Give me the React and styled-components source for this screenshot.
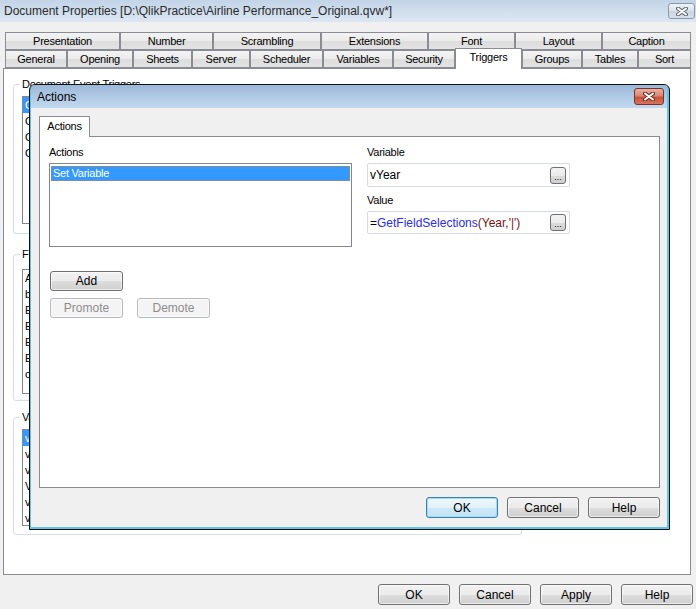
import React from 'react';
import styled, { createGlobalStyle } from 'styled-components';

const GlobalStyle = createGlobalStyle`
  html, body {
    margin: 0;
    padding: 0;
  }
  body {
    width: 696px;
    height: 609px;
    overflow: hidden;
    background: #f0f0f0;
  }
  * {
    box-sizing: border-box;
  }
`;

const Window = styled.div`
  position: relative;
  width: 696px;
  height: 609px;
  display: flex;
  flex-direction: column;
  background: #f0f0f0;
  font-family: 'Liberation Sans', Arial, sans-serif;
  font-size: 11px;
  letter-spacing: -0.25px;
  color: #000;
`;

const TitleBar = styled.div`
  height: ${props => props.$h || 22}px;
  flex: none;
  display: flex;
  align-items: center;
  justify-content: space-between;
  padding: 0 ${props => props.$pr || 1}px 0 ${props => props.$pl || 4}px;
  background: ${props => props.$active
    ? 'linear-gradient(#9cb8d9, #c3d9ef)'
    : 'linear-gradient(#c3d4e7, #dce7f2)'};
`;

const TitleText = styled.span`
  font-size: 12px;
  letter-spacing: 0;
  color: ${props => props.$active ? '#000' : '#2b2b2b'};
`;

const CloseButton = styled.div`
  width: ${props => props.$w}px;
  height: ${props => props.$h}px;
  display: flex;
  align-items: center;
  justify-content: center;
  border-radius: 3px;
  border: 1px solid ${props => props.$red ? '#7e3327' : '#8a98aa'};
  background: ${props => props.$red
    ? 'linear-gradient(#eab0a4 0%, #d98676 45%, #c5553d 55%, #d7735c 100%)'
    : 'linear-gradient(#eef2f6 0%, #dbe2ea 50%, #cbd5e0 51%, #d8e0e9 100%)'};
`;

const Body = styled.div`
  flex: 1;
  display: flex;
  flex-direction: column;
  padding: 10px 0 0 3px;
`;

const TabRow = styled.div`
  display: flex;
  align-items: flex-end;
  height: 18px;
  margin-left: 2px;
`;

const Tab = styled.div`
  position: relative;
  width: ${props => props.$w}px;
  height: ${props => props.$selected ? 21 : 18}px;
  margin-bottom: ${props => props.$selected ? -1 : 0}px;
  z-index: ${props => props.$selected ? 2 : 0};
  display: flex;
  align-items: center;
  justify-content: center;
  padding-bottom: ${props => props.$selected ? 4 : 0}px;
  border: 1px solid #898c95;
  border-bottom: ${props => props.$selected ? 'none' : '1px solid #898c95'};
  background: ${props => props.$selected
    ? '#fff'
    : 'linear-gradient(#f3f3f3 0%, #ebebeb 50%, #dddddd 51%, #e3e3e3 100%)'};
  white-space: nowrap;
`;

const TabPanel = styled.div`
  width: 688px;
  height: 507px;
  border: 1px solid #898c95;
  background: #fff;
  padding: 8px 0 0 9px;
  display: flex;
  flex-direction: column;
`;

const GroupBox = styled.fieldset`
  width: 509px;
  margin: ${props => props.$mt}px 0 0 0;
  padding: ${props => props.$pt}px 8px ${props => props.$pb}px 8px;
  border: 1px solid #d5dfe5;
  border-radius: 3px;
  min-inline-size: 0;
`;

const GroupLegend = styled.legend`
  margin-left: -2px;
  padding: 0 2px;
  line-height: 14px;
  font-size: 11px;
`;

const ListBox = styled.div`
  width: ${props => props.$w}px;
  height: ${props => props.$h}px;
  border: 1px solid #828790;
  background: #fff;
  padding: ${props => props.$pad || '0'};
  overflow: hidden;
`;

const ListItem = styled.div`
  height: ${props => props.$h || 16}px;
  line-height: ${props => props.$h || 16}px;
  padding-left: 2px;
  white-space: nowrap;
  background: ${props => props.$selected ? '#3399ff' : 'transparent'};
  color: ${props => props.$selected ? '#fff' : '#000'};
  outline: ${props => props.$focus ? '1px dotted #c9803a' : 'none'};
  outline-offset: -1px;
`;

const ButtonBar = styled.div`
  display: flex;
  justify-content: flex-end;
  gap: 9px;
  margin-top: ${props => props.$mt}px;
  padding-right: ${props => props.$pr}px;
`;

const Button = styled.div`
  width: ${props => props.$w || 72}px;
  height: ${props => props.$h || 21}px;
  display: flex;
  align-items: center;
  justify-content: center;
  border-radius: 3px;
  border: 1px solid ${props => props.$disabled ? '#b5b9bd' : props.$default ? '#3c7fb1' : '#707070'};
  background: ${props => props.$disabled
    ? '#f4f4f4'
    : props.$default
      ? 'linear-gradient(#eef7fc 0%, #e3f1fa 50%, #cde8f7 51%, #c4e3f5 100%)'
      : 'linear-gradient(#f2f2f2 0%, #ebebeb 50%, #dddddd 51%, #cfcfcf 100%)'};
  box-shadow: ${props => props.$default ? 'inset 0 0 0 1px #9fdcf5' : 'inset 0 0 0 1px rgba(255,255,255,0.6)'};
  color: ${props => props.$disabled ? '#8d8d8d' : '#000'};
  font-size: 12px;
  letter-spacing: 0;
`;

const Dialog = styled.div`
  position: absolute;
  left: 29px;
  top: 84px;
  width: 641px;
  height: 446px;
  z-index: 10;
  display: flex;
  flex-direction: column;
  border: 1px solid #101010;
  border-radius: 6px 6px 0 0;
  background: #5fc4ea;
  padding: 0 2px 2px 1px;
  overflow: hidden;
`;

const DialogBody = styled.div`
  flex: 1;
  background: #f0f0f0;
  padding: 8px 7px 0 8px;
  display: flex;
  flex-direction: column;
`;

const InnerTab = styled.div`
  width: 51px;
  height: 21px;
  margin-bottom: -1px;
  position: relative;
  z-index: 1;
  display: flex;
  align-items: center;
  justify-content: center;
  padding-bottom: 2px;
  border: 1px solid #898c95;
  border-bottom: none;
  background: #fff;
`;

const InnerPanel = styled.div`
  height: 352px;
  border: 1px solid #898c95;
  background: #fff;
  padding: 7px 0 0 9px;
  display: grid;
  grid-template-columns: 303px 203px;
  column-gap: 15px;
  align-items: start;
`;

const Column = styled.div`
  display: flex;
  flex-direction: column;
`;

const Label = styled.div`
  height: 16px;
  line-height: 16px;
  margin-top: ${props => props.$mt || 0}px;
  margin-bottom: 3px;
`;

const ButtonRow = styled.div`
  display: flex;
  gap: 14px;
  margin-top: ${props => props.$mt}px;
  margin-left: 1px;
`;

const TextField = styled.div`
  height: ${props => props.$h}px;
  display: flex;
  align-items: center;
  justify-content: space-between;
  padding: 0 3px 0 2px;
  border: 1px solid #d6dbe1;
  border-radius: 2px;
  background: #fff;
  font-size: 12px;
  letter-spacing: 0;
`;

const BrowseButton = styled.div`
  width: 16px;
  height: 17px;
  display: flex;
  align-items: flex-end;
  justify-content: center;
  padding-bottom: 3px;
  border: 1px solid #707070;
  border-radius: 3px;
  background: linear-gradient(#f2f2f2 0%, #ebebeb 50%, #dddddd 51%, #cfcfcf 100%);
  font-size: 9px;
  line-height: 6px;
  letter-spacing: 0;
`;

const Fn = styled.span`
  color: ${props => props.$c};
`;

const XIcon = ({ w, h, outline }) => (
  <svg width={w} height={h} viewBox={`0 0 ${w} ${h}`}>
    <path d={`M2 1.5 L${w - 2} ${h - 1.5} M${w - 2} 1.5 L2 ${h - 1.5}`} stroke={outline} strokeWidth="4" strokeLinecap="round" />
    <path d={`M2 1.5 L${w - 2} ${h - 1.5} M${w - 2} 1.5 L2 ${h - 1.5}`} stroke="#fff" strokeWidth="2" strokeLinecap="round" />
  </svg>
);

const row1 = [
  ['Presentation', 115], ['Number', 93], ['Scrambling', 108], ['Extensions', 107],
  ['Font', 87], ['Layout', 87], ['Caption', 89],
];

const row2 = [
  ['General', 62], ['Opening', 66], ['Sheets', 59], ['Server', 58], ['Scheduler', 73],
  ['Variables', 70], ['Security', 62], ['Triggers', 67], ['Groups', 60], ['Tables', 56], ['Sort', 53],
];

const groups = [
  {
    title: 'Document Event Triggers', mt: 0, pt: 5, pb: 9, h: 128,
    items: ['OnAnySelect', 'OnOpen', 'OnPostReduceData', 'OnPostReload'], selected: 0,
  },
  {
    title: 'Field Event Triggers', mt: 13, pt: 8, pb: 6, h: 125,
    items: ['Airline', 'bFlightType', 'Equipment', 'Equipment Type', 'Equipment Class', 'Engine', 'carrier'], selected: -1,
  },
  {
    title: 'Variable Event Triggers', mt: 9, pt: 5, pb: 8, h: 97,
    items: ['vYear', 'vMonth', 'vQuarter', 'VSelected', 'vCarrier', 'vRoute'], selected: 0,
  },
];

export default function App() {
  return (
    <Window>
      <GlobalStyle />
      <TitleBar>
        <TitleText>Document Properties [D:\QlikPractice\Airline Performance_Original.qvw*]</TitleText>
        <CloseButton $w={27} $h={16}>
          <XIcon w={12} h={9} outline="#5b6778" />
        </CloseButton>
      </TitleBar>

      <Body>
        <TabRow>
          {row1.map(([label, w]) => (
            <Tab key={label} $w={w}>{label}</Tab>
          ))}
        </TabRow>
        <TabRow>
          {row2.map(([label, w]) => (
            <Tab key={label} $w={w} $selected={label === 'Triggers'}>{label}</Tab>
          ))}
        </TabRow>

        <TabPanel>
          {groups.map(g => (
            <GroupBox key={g.title} $mt={g.mt} $pt={g.pt} $pb={g.pb}>
              <GroupLegend>{g.title}</GroupLegend>
              <ListBox $w={243} $h={g.h}>
                {g.items.map((item, i) => (
                  <ListItem key={item} $selected={i === g.selected}>{item}</ListItem>
                ))}
              </ListBox>
            </GroupBox>
          ))}
        </TabPanel>

        <ButtonBar $mt={9} $pr={3}>
          <Button>OK</Button>
          <Button>Cancel</Button>
          <Button>Apply</Button>
          <Button>Help</Button>
        </ButtonBar>
      </Body>

      <Dialog>
        <TitleBar $active $h={23} $pl={6} $pr={3}>
          <TitleText $active>Actions</TitleText>
          <CloseButton $w={30} $h={17} $red>
            <XIcon w={12} h={9} outline="#6a2a20" />
          </CloseButton>
        </TitleBar>
        <DialogBody>
          <InnerTab>Actions</InnerTab>
          <InnerPanel>
            <Column>
              <Label>Actions</Label>
              <ListBox $w={303} $h={84} $pad="2px 1px">
                <ListItem $h={15} $selected $focus>Set Variable</ListItem>
              </ListBox>
              <ButtonRow $mt={24}>
                <Button $w={73} $h={20}>Add</Button>
              </ButtonRow>
              <ButtonRow $mt={7}>
                <Button $w={73} $h={20} $disabled>Promote</Button>
                <Button $w={73} $h={20} $disabled>Demote</Button>
              </ButtonRow>
            </Column>
            <Column>
              <Label>Variable</Label>
              <TextField $h={24}>
                <span>vYear</span>
                <BrowseButton>...</BrowseButton>
              </TextField>
              <Label $mt={5}>Value</Label>
              <TextField $h={23}>
                <span>
                  =<Fn $c="#2a2af0">GetFieldSelections</Fn><Fn $c="#7a1010">(Year,'|')</Fn>
                </span>
                <BrowseButton>...</BrowseButton>
              </TextField>
            </Column>
          </InnerPanel>
          <ButtonBar $mt={9} $pr={0}>
            <Button $default>OK</Button>
            <Button>Cancel</Button>
            <Button>Help</Button>
          </ButtonBar>
        </DialogBody>
      </Dialog>
    </Window>
  );
}
